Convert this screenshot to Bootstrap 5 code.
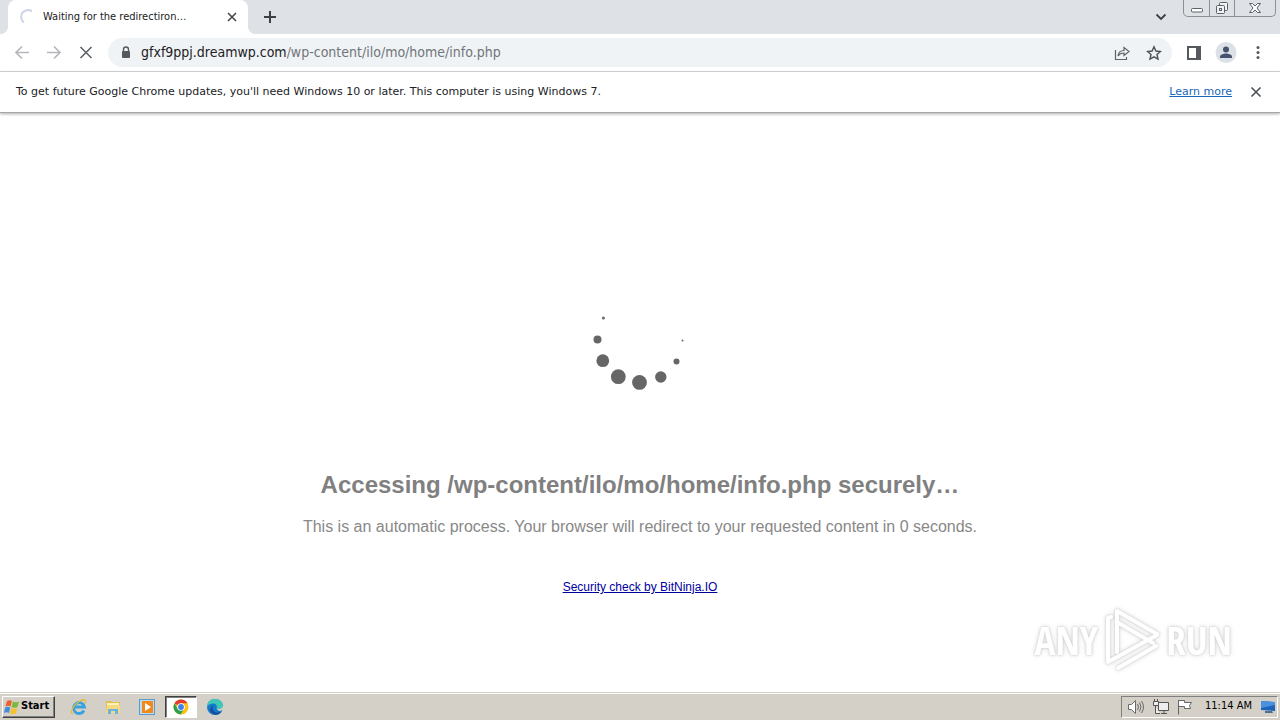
<!DOCTYPE html>
<html lang="en">
<head>
<meta charset="utf-8">
<meta name="viewport" content="width=device-width, initial-scale=1">
<title>Waiting for the redirectiron…</title>
<link href="https://cdn.jsdelivr.net/npm/bootstrap@5.3.0/dist/css/bootstrap.min.css" rel="stylesheet">
<style>
  body { font-family: "DejaVu Sans Condensed", "Noto Sans", sans-serif; font-size: 11px; color: #202124; background: #fff; }
  button { color: #5f6368; }
  svg { display: block; flex: none; }
  .bare { background: none; border: 0; padding: 0; }
  .tab-strip { height: 34px; background: #dee1e6; padding-left: 8px; }
  .chrome-tab { width: 240px; height: 34px; background: #fff; border-radius: 8px 8px 0 0; padding: 0 10px 0 12px; position: relative; }
  .chrome-tab::before, .chrome-tab::after { content: ""; position: absolute; bottom: 0; width: 8px; height: 8px; }
  .chrome-tab::before { left: -8px; background: radial-gradient(circle at 0 0, #dee1e6 8px, #fff 8px); }
  .chrome-tab::after { right: -8px; background: radial-gradient(circle at 100% 0, #dee1e6 8px, #fff 8px); }
  .win-buttons { height: 17px; border: 1px solid #8c8f94; border-top: 0; border-radius: 0 0 5px 5px; margin-right: 4px; }
  .win-buttons button { height: 16px; width: 25px; display: flex; justify-content: center; }
  .win-buttons button + button { border-left: 1px solid #8c8f94; }
  .win-buttons button:last-child { width: 41px; }
  .toolbar { height: 38px; border-bottom: 1px solid #d6d8db; padding: 0 15px 0 12px; }
  .nav-buttons { gap: 12px; margin-right: 12px; }
  .omnibox { height: 29px; border-radius: 15px; background: #f0f3f5; padding: 0 10px 0 11px; }
  .tools { gap: 14px; margin-left: 15px; }
  .address { font-size: 14px; }
  .address span { color: #70757a; }
  .infobar { height: 41px; border-bottom: 1px solid #a6a6a6; box-shadow: 0 1px 3px #0005; padding: 0 16px; font-family: "DejaVu Sans", sans-serif; }
  .infobar a { color: #1967b8; }
  .page-view { font-family: "Liberation Sans", Arial, sans-serif; color: #808080; padding-top: 172px; }
  .page-view h1 { font-size: 24px; line-height: 28px; font-weight: 700; margin: 76px 0 0; }
  .page-view p { font-size: 16px; line-height: 20px; margin: 18px 0 0; color: #888; }
  .page-view .check { font-size: 12px; line-height: 16px; margin-top: 42px; color: #0000a0; }
  .watermark { position: absolute; right: 48px; bottom: 20px; gap: 5px; font-family: "Open Sans Condensed", "Noto Sans ExtraCondensed", "Roboto Condensed", "Liberation Sans Narrow", sans-serif; font-size: 39px; line-height: 60px; color: #fff; filter: drop-shadow(0 0 1px #ccc) drop-shadow(0 0 2px #ddd); }
  .taskbar { height: 28px; background: #d4d0c8; border-top: 1px solid #d4d0c8; box-shadow: inset 0 1px #fff; padding: 2px 2px; color: #000; }
  .start { height: 22px; width: 53px; background: #d4d0c8; border: 1px solid; border-color: #fff #404040 #404040 #fff; box-shadow: inset -1px -1px #808080; color: #000; font-weight: 700; padding: 0 1px; gap: 1px; }
  .apps { margin-left: 8px; gap: 2px; }
  .apps button { width: 32px; height: 22px; display: flex; align-items: center; justify-content: center; border: 1px solid transparent; }
  .apps .active { background: #fff; border-color: #404040 #fff #fff #404040; box-shadow: inset 1px 1px #808080; }
  .tray { height: 22px; border: 1px solid; border-color: #808080 #fff #fff #808080; padding: 0 1px 0 5px; gap: 8px; }
</style>
</head>
<body class="d-flex flex-column min-vh-100 overflow-hidden">
<header>
  <div class="tab-strip d-flex">
    <div class="chrome-tab d-flex align-items-center">
      <svg width="15" height="16" viewBox="0 0 15 16" fill="none" stroke="#cbd3ea" stroke-width="2"><path d="M12 2.400A6.300 6.300 0 1 0 4 13.500"/></svg>
      <span class="ms-2 text-nowrap">Waiting for the redirectiron…</span>
      <button class="bare ms-auto" aria-label="Close tab"><svg width="12" height="12" viewBox="0 0 12 12" stroke="#44474a" stroke-width="1.600"><path d="M2 2l8 8M10 2l-8 8"/></svg></button>
    </div>
    <button class="bare ms-3" aria-label="New tab"><svg width="12" height="12" viewBox="0 0 12 12" stroke="#3c4043" stroke-width="2"><path d="M6 0v12M0 6h12"/></svg></button>
    <div class="ms-auto d-flex align-items-start">
      <button class="bare align-self-center me-3" aria-label="Search tabs"><svg width="12" height="12" viewBox="0 0 12 12" fill="none" stroke="#3c4043" stroke-width="1.800"><path d="M1.500 3.500L6 8l4.500-4.500"/></svg></button>
      <div class="win-buttons d-flex">
        <button class="bare" aria-label="Minimize"><svg width="14" height="16" viewBox="0 0 14 16" fill="#fff" stroke="#5d6064"><rect x="1.500" y="8.500" width="11" height="3.500" rx="1"/></svg></button>
        <button class="bare" aria-label="Restore"><svg width="14" height="16" viewBox="0 0 14 16" fill="#f1f2f4" stroke="#5d6064"><rect x="4.500" y="2.500" width="8" height="8" rx="1"/><rect x="1.500" y="5.500" width="8" height="8" rx="1"/><rect x="4.500" y="8.500" width="2" height="2"/></svg></button>
        <button class="bare" aria-label="Close"><svg width="14" height="16" viewBox="0 0 14 16" fill="#fff" stroke="#5d6064"><path d="M1.500 3.500h3L7 6l2.500-2.500h3L9 8l3.500 4.500h-3L7 10l-2.500 2.500h-3L5 8z"/></svg></button>
      </div>
    </div>
  </div>
  <nav class="toolbar d-flex align-items-center">
    <div class="nav-buttons d-flex">
      <button class="bare" aria-label="Back"><svg width="20" height="20" viewBox="0 0 20 20" fill="none" stroke="#b5b7ba" stroke-width="1.700"><path d="M17 9.500H4M10 3.500l-6 6 6 6"/></svg></button>
      <button class="bare" aria-label="Forward"><svg width="20" height="20" viewBox="0 0 20 20" fill="none" stroke="#b5b7ba" stroke-width="1.700"><path d="M3 9.500h13M10 3.500l6 6-6 6"/></svg></button>
      <button class="bare" aria-label="Stop"><svg width="20" height="20" viewBox="0 0 20 20" stroke="#5f6368" stroke-width="1.600"><path d="M4.500 4l11 11M15.500 4l-11 11"/></svg></button>
    </div>
    <div class="omnibox d-flex align-items-center flex-grow-1">
      <svg width="14" height="14" viewBox="0 0 14 14"><path d="M4.500 6V3.500a2.500 2.500 0 0 1 5 0V6" fill="none" stroke="#55595e" stroke-width="1.400"/><rect x="3" y="5" width="8" height="7" rx="1" fill="#55595e"/></svg>
      <div class="address ms-2 flex-grow-1" role="textbox" aria-label="Address bar" contenteditable="true" spellcheck="false">gfxf9ppj.dreamwp.com<span>/wp-content/ilo/mo/home/info.php</span></div>
      <button class="bare" aria-label="Share"><svg width="16" height="16" viewBox="0 0 16 16" fill="none" stroke="#5f6368" stroke-width="1.200"><path d="M1.500 5v9.500h11V12"/><path d="M4 11c.5-4 3-5.500 6-5.500V2.500L15 6.500 10 10.500V8C7.500 8 5.500 8.800 4 11z"/></svg></button>
      <button class="bare ms-3" aria-label="Bookmark"><svg width="16" height="16" viewBox="0 0 16 16" fill="none" stroke="#4d5156" stroke-width="1.400"><path d="M8 1.800l1.900 4.200 4.500.5-3.400 3 1 4.600L8 11.800 4 14.100l1-4.600-3.400-3L6.100 6z"/></svg></button>
    </div>
    <div class="tools d-flex align-items-center">
      <button class="bare" aria-label="Side panel"><svg width="14" height="14" viewBox="0 0 14 14"><rect x="1" y="1" width="12" height="12" fill="none" stroke="#55595e" stroke-width="2"/><path d="M9 1h4v12H9z" fill="#55595e"/></svg></button>
      <button class="bare" aria-label="Profile"><svg width="22" height="22" viewBox="0 0 22 22"><circle cx="11" cy="10.500" r="10.500" fill="#dce0e7"/><g fill="#485370"><circle cx="11" cy="7.500" r="3"/><path d="M5 16v-1.500c0-2 4-3 6-3s6 1 6 3V16z"/></g></svg></button>
      <button class="bare" aria-label="Menu"><svg width="14" height="16" viewBox="0 0 14 16" fill="#55595e"><circle cx="7" cy="2.500" r="1.500"/><circle cx="7" cy="7.500" r="1.500"/><circle cx="7" cy="12.500" r="1.500"/></svg></button>
    </div>
  </nav>
  <div class="infobar d-flex align-items-center">
    <span>To get future Google Chrome updates, you'll need Windows 10 or later. This computer is using Windows 7.</span>
    <a href="#" class="ms-auto">Learn more</a>
    <button class="bare ms-3" aria-label="Dismiss"><svg width="16" height="16" viewBox="0 0 16 16" stroke="#4d5156" stroke-width="1.600"><path d="M3.500 3.500l9 9M12.500 3.500l-9 9"/></svg></button>
  </div>
</header>
<main class="page-view flex-grow-1 position-relative d-flex flex-column align-items-center text-center">
  <svg width="110" height="110" viewBox="-55 -55 110 110" fill="#666"><circle cx="-36.600" cy="-22" r="1.500"/><circle cx="-42.500" cy="-.5" r="4"/><circle cx="-37.200" cy="20.700" r="6.400"/><circle cx="-21.700" cy="36.700" r="7.400"/><circle cx="-.5" cy="42.400" r="7.400"/><circle cx="20.800" cy="37" r="5.700"/><circle cx="36.500" cy="21.500" r="3"/><circle cx="42.500" cy=".4" r="1"/></svg>
  <h1>Accessing /wp-content/ilo/mo/home/info.php securely…</h1>
  <p>This is an automatic process. Your browser will redirect to your requested content in 0 seconds.</p>
  <a href="#" class="check">Security check by BitNinja.IO</a>
  <div class="watermark d-flex align-items-center">
    <span>ANY</span>
    <svg width="58" height="64" viewBox="0 0 58 64" fill="none" stroke="#fff" stroke-width="4" stroke-linejoin="round" stroke-linecap="round"><path d="M14 44V3l40 23M14 14l36 21M8 9L5 10v44l49-27M15 60l38-22"/></svg>
    <span>RUN</span>
  </div>
</main>
<footer class="taskbar d-flex align-items-center">
  <button class="start d-flex align-items-center">
    <svg width="16" height="16" viewBox="0 0 16 16"><path d="M3 2c2-1 3-1 5 0L6.500 7.500c-2-1-3-1-5 0z" fill="#e8602c"/><path d="M9 2.500c2 1 4 1 6 0L13.500 8c-2 1-4 1-6 0z" fill="#7db83a"/><path d="M1.200 8.500c2-1 3-1 5 0L5 14c-2-1-3-1-5 0z" fill="#3f8ddc"/><path d="M7.200 9c2 1 4 1 6 0L12 14.500c-2 1-4 1-6 0z" fill="#f6c12f"/></svg>Start</button>
  <div class="apps d-flex">
    <button class="bare" aria-label="Internet Explorer"><svg width="18" height="18" viewBox="0 0 18 18" fill="none"><path d="M14 12.500A5.500 5.500 0 1 1 14.500 9H5" stroke="#36a3df" stroke-width="2.800"/><path d="M3 15.500C-1 16 3 7 9 3.500c5-3 8-2 6 2" stroke="#e5bb37" stroke-width="1.300"/></svg></button>
    <button class="bare" aria-label="Explorer"><svg width="18" height="18" viewBox="0 0 18 18"><path d="M2 3h5l1 1h8v10H2z" fill="#e4bd57"/><path d="M3 5h12v4H3z" fill="#fff2b5"/><path d="M3 7h13v8H2z" fill="#f5da83"/><path d="M4 16v-5h10v5h-3v-3H7v3z" fill="#69b4dc"/></svg></button>
    <button class="bare" aria-label="Media Player"><svg width="18" height="18" viewBox="0 0 18 18"><rect x="1.500" y="1.500" width="15" height="15" fill="#bcdcf2" stroke="#5a9bc9"/><rect x="4" y="3" width="11" height="12" fill="#f08a1c"/><path d="M7 5l6 4-6 4z" fill="#fff"/></svg></button>
    <button class="bare active" aria-label="Chrome"><svg width="16" height="16" viewBox="0 0 16 16"><circle cx="8" cy="8" r="7.500" fill="#fbc116"/><path d="M8 8L1.500 4.250A7.500 7.500 0 0 1 14.500 4.250H8z" fill="#e33b2e"/><path d="M1.500 4.250A7.500 7.500 0 0 0 7.500 15.500L11.200 9.900 8 8 4.800 9.900z" fill="#2da04e"/><circle cx="8" cy="8" r="3.800" fill="#fff"/><circle cx="8" cy="8" r="2.900" fill="#3f7fea"/></svg></button>
    <button class="bare" aria-label="Edge"><svg width="18" height="18" viewBox="0 0 18 18"><circle cx="9" cy="9" r="8" fill="#1479ca"/><path d="M1 9C1 4 4 1 9 1c5 0 8 3 8 6.500 0 3-4 4.500-6.500 3 1.500-3-1-5-3.500-5S2 7 1 9z" fill="#40c8b5"/><path d="M7 8c-2 4 2 8 7 6 1-.3 2-1 2-1-2 4-7 5-10 2-3-2-2-6 1-7z" fill="#154d96"/><path d="M10.500 10.500c2.500 1.500 6.500 0 6.500-3v4c-2 2-5 2-6.500-1z" fill="#d4d0c8"/></svg></button>
  </div>
  <div class="tray ms-auto d-flex align-items-center">
    <svg width="18" height="16" viewBox="0 0 18 16" fill="none" stroke="#696969"><path d="M1.500 5.500h3l4-4v13l-4-4h-3z" fill="#fff"/><path d="M10.500 5q2 3 0 6M12.500 3.500q3 4.500 0 9M14.500 2q4 6 0 12"/></svg>
    <svg width="16" height="16" viewBox="0 0 16 16" fill="#eee" stroke="#555"><path d="M5.500 3.500h10v8h-10zM8 14.500h6M11 11.500v3M2.500 7v7.500H7"/><path d="M.5 2.500h5v4h-5zM1.500 0v2M4.500 0v2"/></svg>
    <svg width="16" height="16" viewBox="0 0 16 16" fill="#fff" stroke="#666"><path d="M1.500 1v14.500M1.500 1.500h6v2h7l-2 3 1 3h-6v-2h-6"/></svg>
    <time class="ms-1 text-nowrap">11:14 AM</time>
    <svg width="16" height="16" viewBox="0 0 16 16"><path d="M1 2l14 1v9l-14-1z" fill="#1d62bb"/><path d="M1 2l14 1v3L1 9z" fill="#4b92de"/><path d="M5 12h7l1 2H5z" fill="#4f6e91"/></svg>
  </div>
</footer>
<script src="https://cdn.jsdelivr.net/npm/bootstrap@5.3.0/dist/js/bootstrap.bundle.min.js"></script>
</body>
</html>
